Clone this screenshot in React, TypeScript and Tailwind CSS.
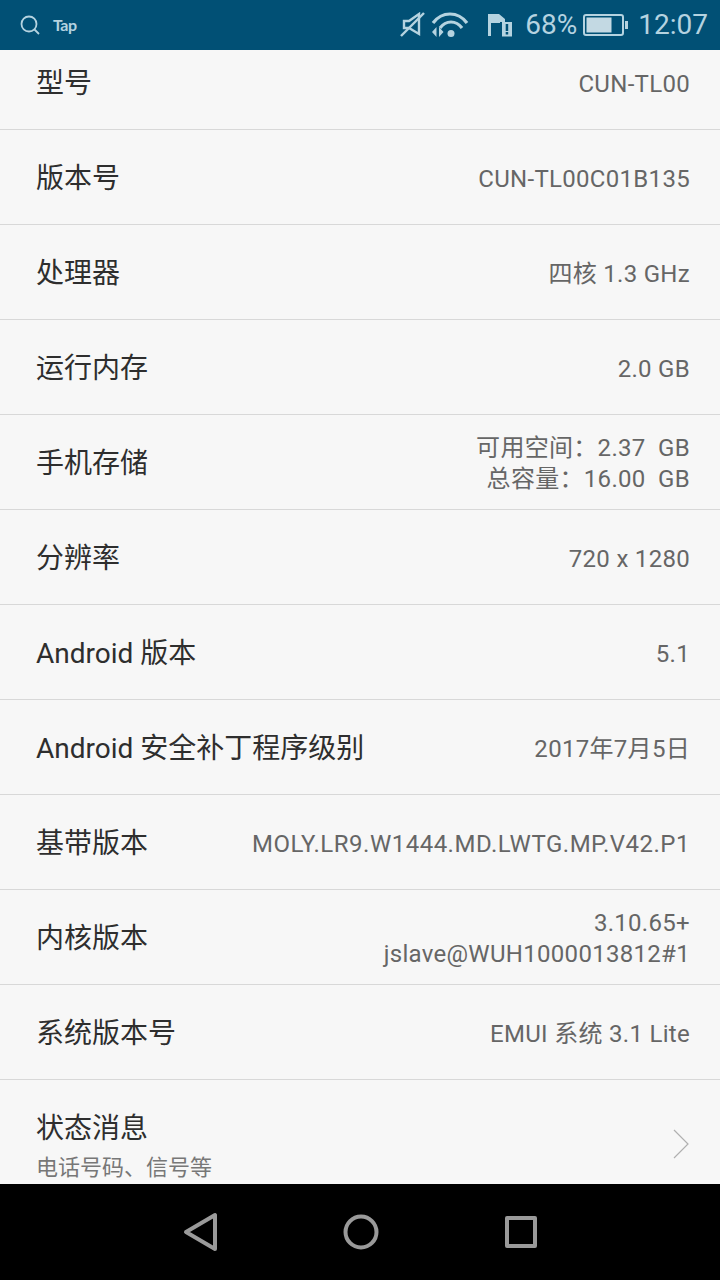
import React from 'react';

const rows: { label: string; value: string[]; wide?: boolean }[] = [
  { label: '型号', value: ['CUN-TL00'] },
  { label: '版本号', value: ['CUN-TL00C01B135'] },
  { label: '处理器', value: ['四核 1.3 GHz'] },
  { label: '运行内存', value: ['2.0 GB'] },
  { label: '手机存储', value: ['可用空间：2.37  GB', '总容量：16.00  GB'] },
  { label: '分辨率', value: ['720 x 1280'] },
  { label: 'Android 版本', value: ['5.1'] },
  { label: 'Android 安全补丁程序级别', value: ['2017年7月5日'] },
  { label: '基带版本', value: ['MOLY.LR9.W1444.MD.LWTG.MP.V42.P1'], wide: true },
  { label: '内核版本', value: ['3.10.65+', 'jslave@WUH1000013812#1'] },
  { label: '系统版本号', value: ['EMUI 系统 3.1 Lite'] },
];

const StatusBar: React.FC = () => (
  <div className="h-[50px] shrink-0 bg-[#015075] flex items-center justify-between pl-[20px] pr-[12px] text-[#b5d3e0]">
    <div className="flex items-center gap-[13px]">
      <svg width="20" height="20" viewBox="0 0 20 20" fill="none" stroke="currentColor" strokeWidth="1.8">
        <circle cx="9" cy="9" r="7.5" />
        <path d="M14.5 14.5 L19 19" />
      </svg>
      <span className="text-[16px] font-bold tracking-[-0.5px] font-['Lato',sans-serif]">Tap</span>
    </div>
    <div className="flex items-center">
      <svg width="26" height="26" viewBox="0 0 26 26" fill="none" stroke="currentColor" strokeWidth="2.4" className="mr-[5px]">
        <path d="M4 9 H9 L19 2 V22 L9 16 H4 Z" />
        <path d="M1 24 L24 1" />
      </svg>
      <svg width="38" height="26" viewBox="0 0 38 26" fill="none" stroke="currentColor" strokeWidth="3.200" className="mr-[18px]">
        <path d="M2 11 C11 -1 27 -1 36 11" />
        <path d="M9 16 C15 8 25 8 31 16" />
        <circle cx="20" cy="21.500" r="3.500" fill="currentColor" stroke="none" />
        <path d="M5.500 15 L1 20 L5.500 25 Z M8 15 L12.500 20 L8 25 Z" fill="currentColor" stroke="none" />
      </svg>
      <svg width="26" height="24" viewBox="0 0 26 24" className="mr-[12px]">
        <path d="M1 1 H12 L18 6 V9 H13 V20 H4 V23 H1 Z" fill="currentColor" />
        <path d="M4 10 H13 V20 H4 Z" fill="#015075" />
        <rect x="15" y="9" width="10" height="14.500" fill="currentColor" />
        <rect x="18.700" y="11" width="2.500" height="7" fill="#015075" />
        <rect x="18.700" y="19" width="2.500" height="2.500" fill="#015075" />
      </svg>
      <span className="text-[28px] font-['Roboto',sans-serif] leading-none mr-[6px]">68%</span>
      <svg width="46" height="24" viewBox="0 0 46 24" className="mr-[9px]">
        <rect x="1" y="2" width="39" height="20" rx="2" fill="none" stroke="currentColor" strokeWidth="2" />
        <rect x="3.500" y="4.500" width="25" height="15" fill="#c3d9e3" />
        <rect x="42" y="8" width="3" height="8" fill="currentColor" />
      </svg>
      <span className="text-[28px] font-['Roboto',sans-serif] leading-none">12:07</span>
    </div>
  </div>
);

const NavBar: React.FC = () => (
  <div className="h-[96px] shrink-0 bg-black relative flex items-center justify-center">
    <svg width="36" height="40" viewBox="0 0 36 40" fill="none" stroke="#9a9a9a" strokeWidth="4" strokeLinejoin="round" className="absolute left-[183px] top-[28px]">
      <path d="M3 20 L32 3 V37 Z" />
    </svg>
    <svg width="36" height="36" viewBox="0 0 36 36" fill="none" stroke="#9a9a9a" strokeWidth="4" className="absolute left-[343px] top-[30px]">
      <circle cx="18" cy="18" r="15.500" />
    </svg>
    <svg width="34" height="34" viewBox="0 0 34 34" fill="none" stroke="#9a9a9a" strokeWidth="4" strokeLinejoin="round" className="absolute left-[504px] top-[31px]">
      <rect x="3" y="3" width="28" height="28" />
    </svg>
  </div>
);

const App: React.FC = () => {
  return (
    <div className="w-[720px] h-[1280px] flex flex-col overflow-hidden bg-[#f7f7f7] font-['Roboto','Noto_Sans_CJK_SC',sans-serif]">
      <StatusBar />
      <div className="flex-1 overflow-hidden">
        <div className="-mt-[15px]">
          {rows.map((r) => (
            <div key={r.label} className="h-[95px] flex items-center justify-between pl-[36px] pr-[30px] pt-[4px] border-b border-[#d8d8d8]">
              <span className="text-[28px] text-[#2e2e2e] whitespace-pre">{r.label}</span>
              <div className={`flex flex-col items-end text-[24px] leading-[31px] text-[#666666] ${r.wide ? 'tracking-[0.5px]' : 'tracking-[0.3px]'}`}>
                {r.value.map((v) => (
                  <span key={v} className="whitespace-pre">{v}</span>
                ))}
              </div>
            </div>
          ))}
          <div className="h-[104px] flex items-start justify-between pl-[36px] pr-[30px] pt-[30px]">
            <div className="flex flex-col">
              <span className="text-[28px] leading-[38px] text-[#2e2e2e]">状态消息</span>
              <span className="text-[22px] leading-[32px] text-[#777777] mt-[4px]">电话号码、信号等</span>
            </div>
            <svg width="18" height="30" viewBox="0 0 18 30" fill="none" stroke="#b0b0b0" strokeWidth="1.2" className="mt-[19px]">
              <path d="M2 1 L16 15 L2 29" />
            </svg>
          </div>
        </div>
      </div>
      <NavBar />
    </div>
  );
};

export default App;
